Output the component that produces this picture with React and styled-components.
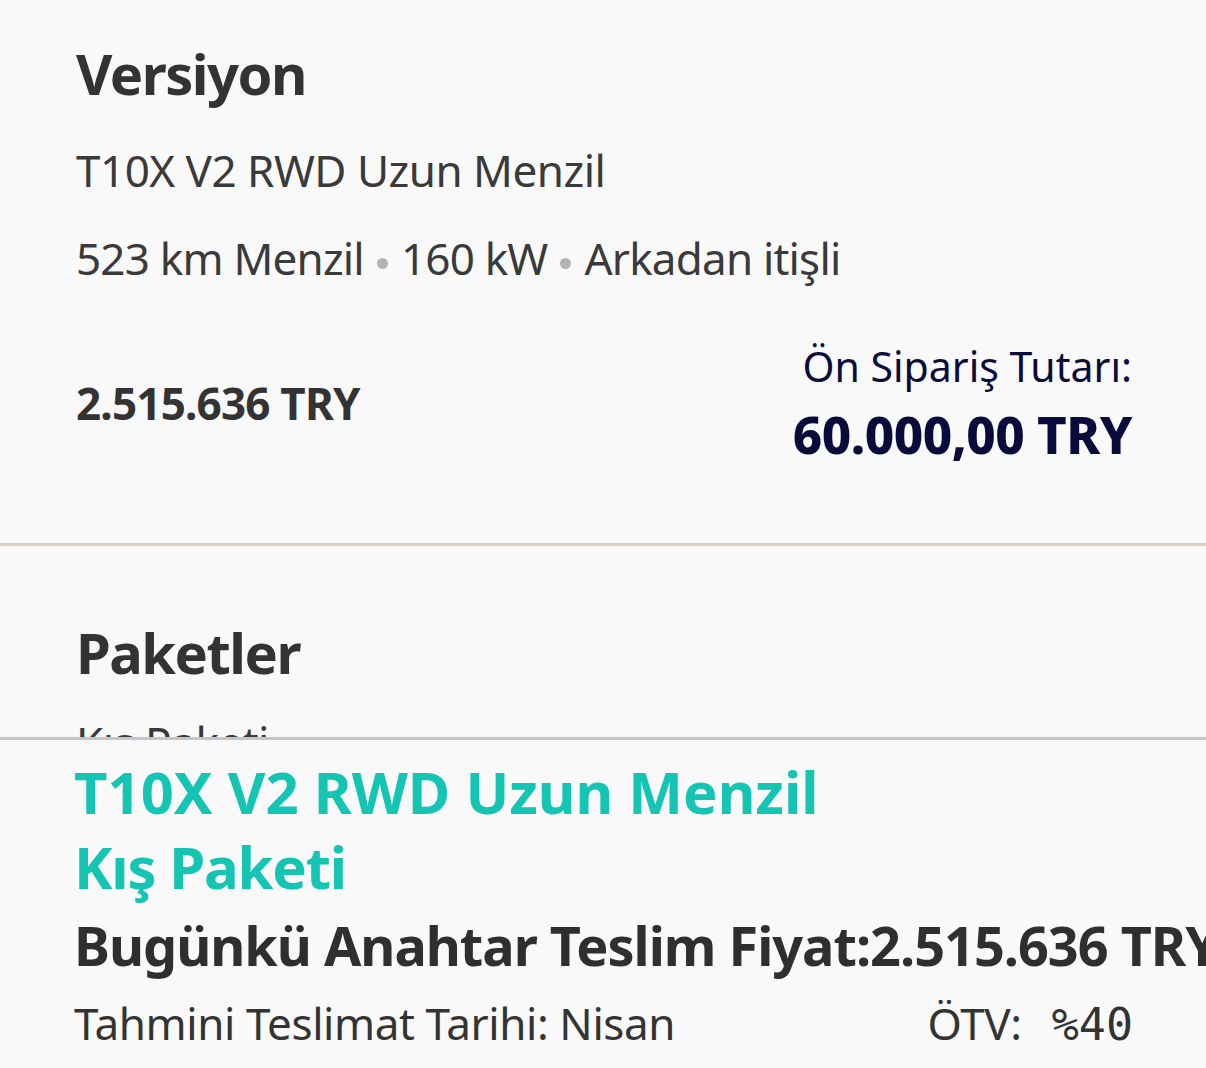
import styled, { createGlobalStyle } from 'styled-components';

const GlobalStyle = createGlobalStyle`
  html, body {
    margin: 0;
    padding: 0;
    background: #f9f9f9;
  }
  body {
    font-family: 'Noto Sans', 'Open Sans', sans-serif;
    color: #333333;
  }
`;

const Screen = styled.div`
  height: 100vh;
  display: flex;
  flex-direction: column;
  overflow: hidden;
  background: #f9f9f9;
`;

const Scroll = styled.div`
  flex: 0 0 737px;
  overflow: hidden;
`;

const Section = styled.section`
  padding: ${(p) => p.$pad || '45px 76px 0'};
  border-bottom: ${(p) => (p.$divider ? '3px solid #dccfc7' : 'none')};
`;

const Title = styled.h2`
  margin: 0;
  font-size: 56px;
  line-height: 1;
  font-weight: 700;
  color: #333333;
  letter-spacing: -1.5px;
`;

const Line = styled.p`
  margin: ${(p) => p.$mt || 0}px 0 0;
  font-size: 44px;
  line-height: 1;
  font-weight: 400;
  color: #3a3a3a;
  letter-spacing: ${(p) => p.$ls || '-0.5px'};
  white-space: nowrap;
`;

const Dot = styled.span`
  display: inline-block;
  width: 11px;
  height: 11px;
  border-radius: 50%;
  background: #b3b3b3;
  margin: 0 13px;
  vertical-align: middle;
`;

const PriceRow = styled.div`
  display: flex;
  justify-content: space-between;
  align-items: center;
  margin-top: 66px;
  padding-bottom: 83px;
`;

const ListPrice = styled.span`
  font-size: 44px;
  font-weight: 700;
  color: #333333;
  letter-spacing: -0.8px;
`;

const Deposit = styled.div`
  display: flex;
  flex-direction: column;
  align-items: flex-end;
  margin-right: -2px;
  color: #0b0b3b;
`;

const DepositLabel = styled.span`
  font-size: 41px;
  line-height: 1;
  letter-spacing: 0;
`;

const DepositValue = styled.span`
  margin-top: 22px;
  font-size: 51px;
  line-height: 1;
  font-weight: 800;
  letter-spacing: -0.5px;
`;

const Sheet = styled.footer`
  flex: 1;
  border-top: 3px solid #c4c4c9;
  background: #f9f9f9;
  padding: 14px 0 0 74px;
  white-space: nowrap;
`;

const Highlight = styled.div`
  font-size: 58px;
  line-height: 75px;
  font-weight: 700;
  color: #14c5b4;
  letter-spacing: ${(p) => p.$ls || '0'};
`;

const Total = styled.div`
  margin-top: 4px;
  font-size: 54px;
  line-height: 75px;
  font-weight: 700;
  color: #2f2f2f;
  letter-spacing: -1px;
`;

const Meta = styled.div`
  display: flex;
  justify-content: space-between;
  align-items: baseline;
  margin-top: 4px;
  padding-right: 73px;
  font-size: 44px;
  line-height: 72px;
  color: #333333;
  letter-spacing: -0.4px;
`;

const Mono = styled.span`
  font-family: 'DejaVu Sans Mono', monospace;
  font-size: 45px;
  margin-left: 30px;
  letter-spacing: 0;
`;

export default function App() {
  return (
    <>
      <GlobalStyle />
      <Screen>
        <Scroll>
          <Section $divider>
            <Title>Versiyon</Title>
            <Line $mt={47}>T10X V2 RWD Uzun Menzil</Line>
            <Line $mt={44} $ls="-0.8px">
              523 km Menzil<Dot />160 kW<Dot />Arkadan itişli
            </Line>
            <PriceRow>
              <ListPrice>2.515.636 TRY</ListPrice>
              <Deposit>
                <DepositLabel>Ön Sipariş Tutarı:</DepositLabel>
                <DepositValue>60.000,00 TRY</DepositValue>
              </Deposit>
            </PriceRow>
          </Section>
          <Section $pad="78px 76px 0">
            <Title>Paketler</Title>
            <Line $mt={40}>Kış Paketi</Line>
          </Section>
        </Scroll>
        <Sheet>
          <Highlight>T10X V2 RWD Uzun Menzil</Highlight>
          <Highlight $ls="-1.2px">Kış Paketi</Highlight>
          <Total>Bugünkü Anahtar Teslim Fiyat:2.515.636 TRY</Total>
          <Meta>
            <span>Tahmini Teslimat Tarihi: Nisan</span>
            <span>
              ÖTV:<Mono>%40</Mono>
            </span>
          </Meta>
        </Sheet>
      </Screen>
    </>
  );
}
